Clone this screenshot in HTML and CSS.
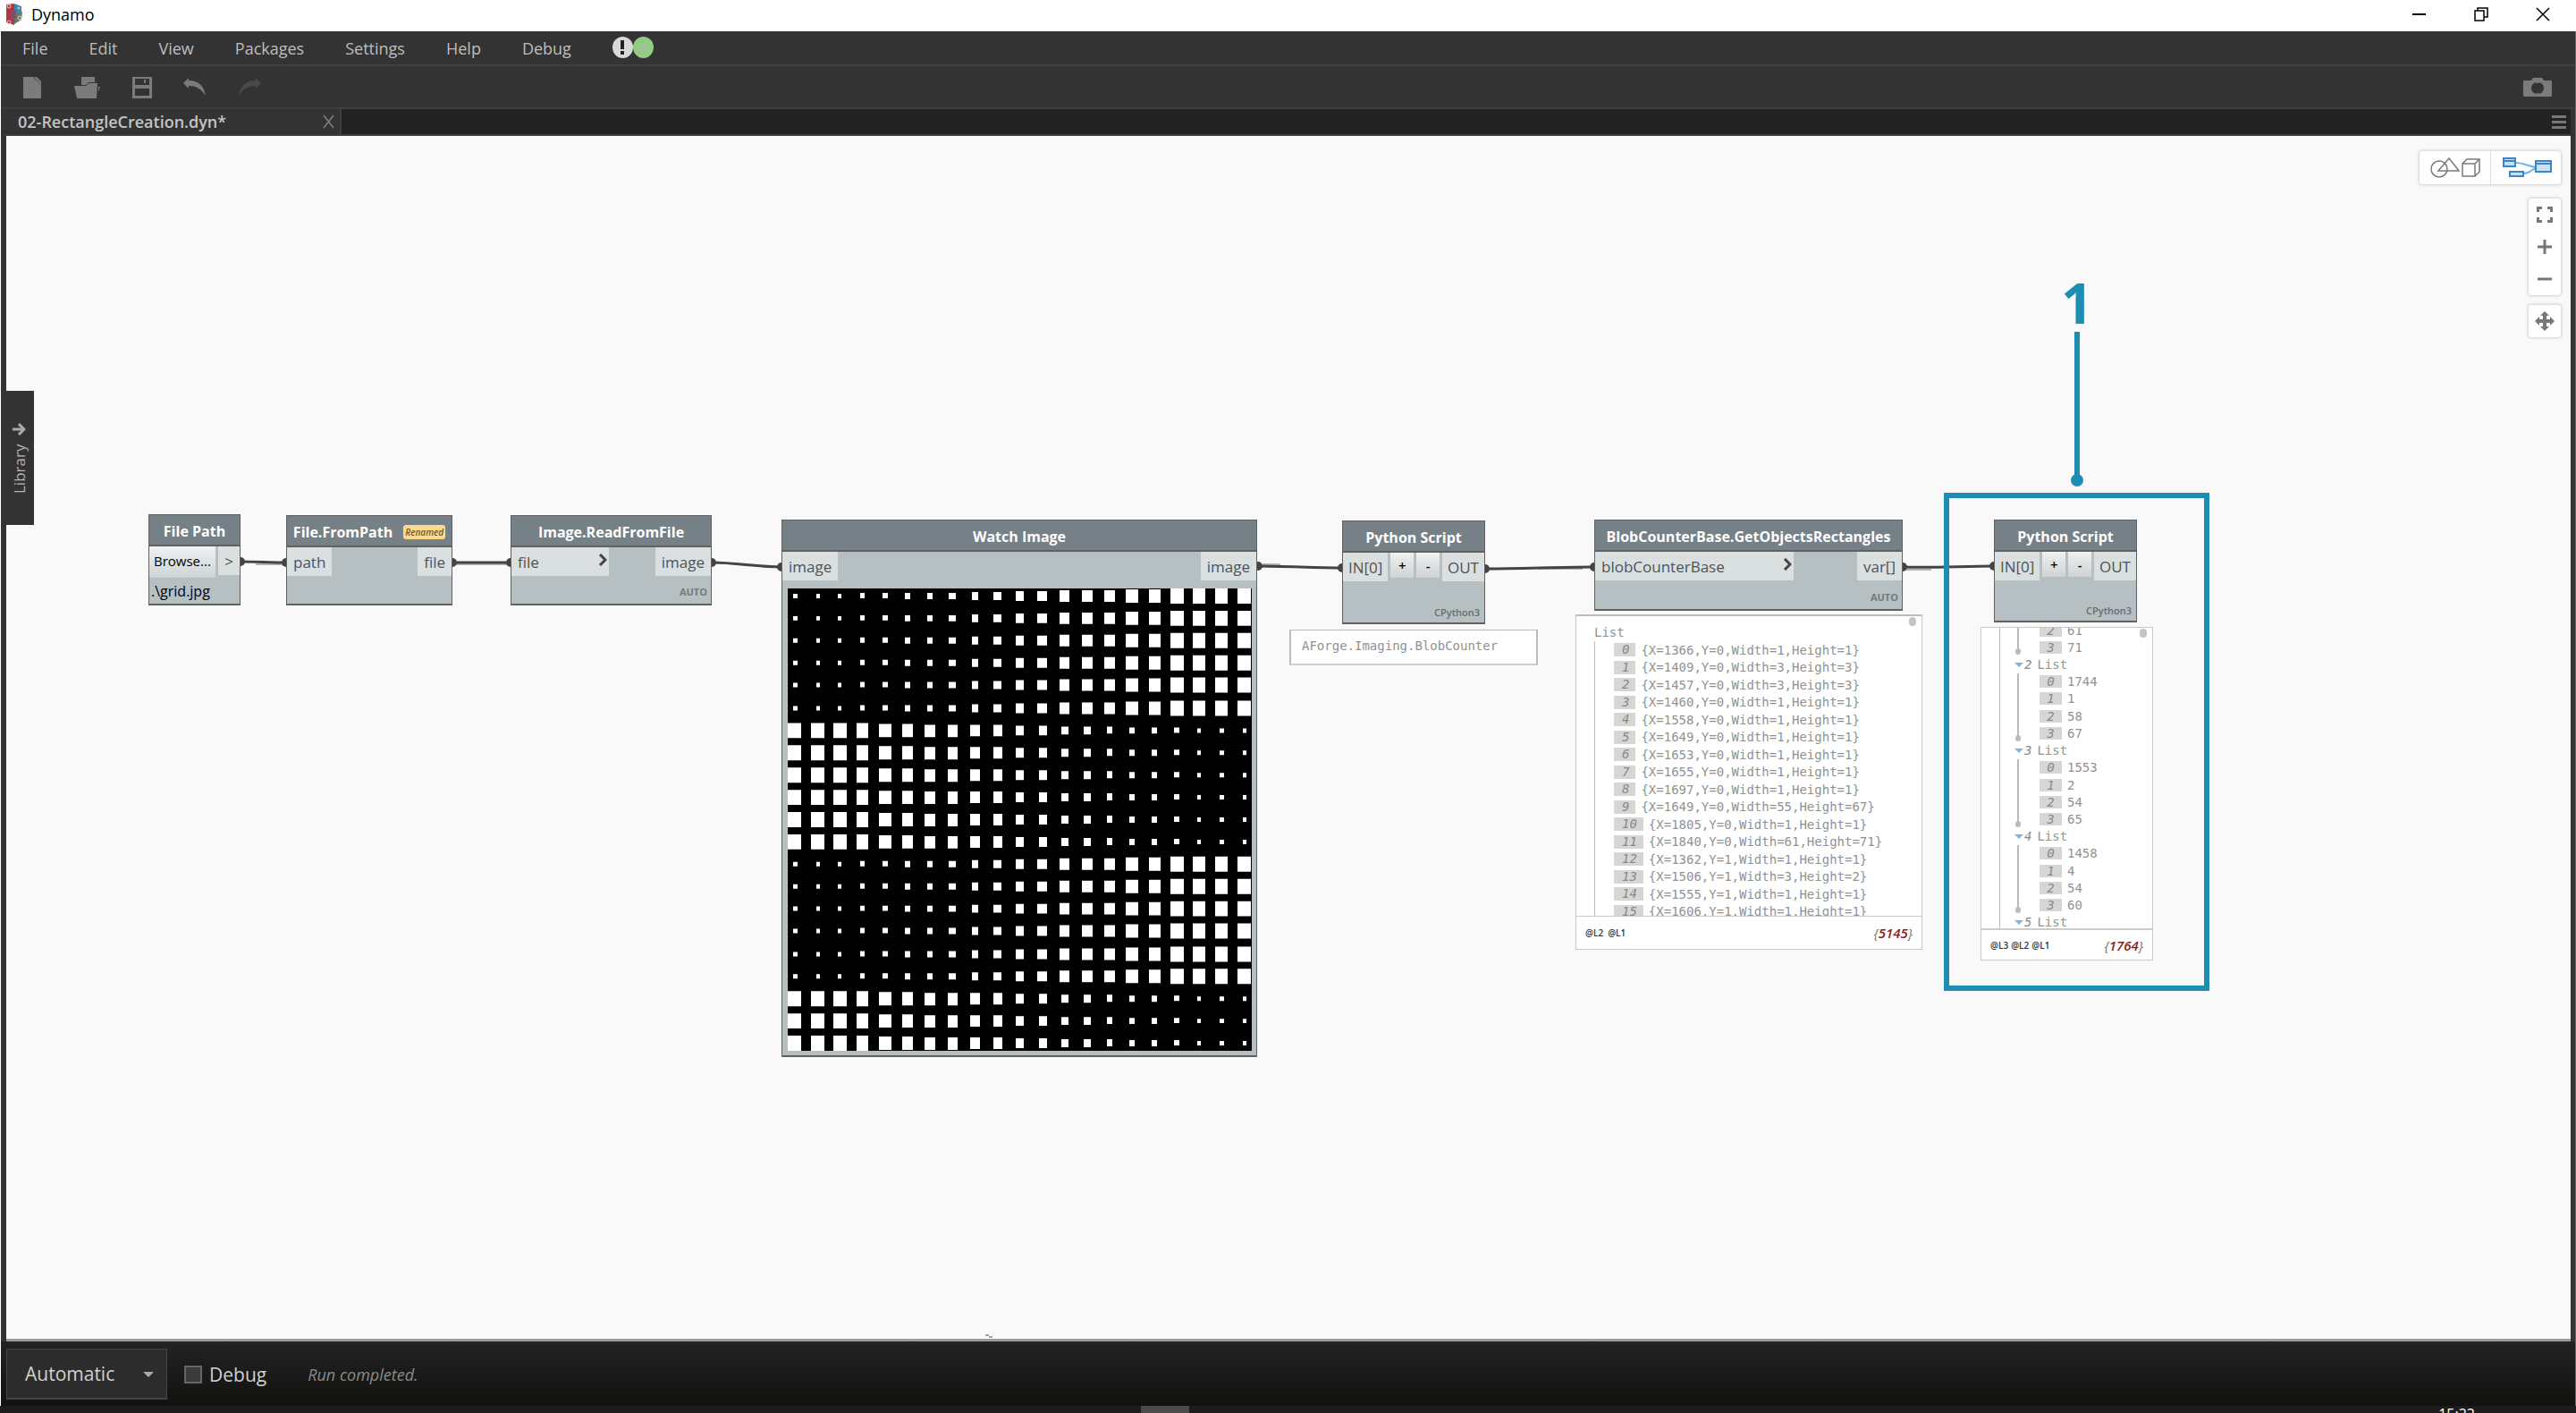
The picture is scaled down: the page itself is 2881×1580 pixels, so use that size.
FILE: index.html
```html
<!DOCTYPE html>
<html lang="en">
<head>
<meta charset="utf-8">
<title>Dynamo</title>
<link rel="stylesheet" href="styles.css">
</head>
<body>
<header class="titlebar">
  <svg class="logo" width="18" height="24" viewBox="0 0 18 24" aria-hidden="true">
    <path d="M0 1 9 0v24L0 21z" fill="#b5363f"/><path d="M9 0 17 3v7l-8 4z" fill="#3f86b4"/><path d="M9 12l9-3-1 9-8 5z" fill="#5e7d62"/><path d="M4 8l7-1v9l-6 5z" fill="#8a4a63"/>
    <g fill="none" stroke="#e9c9c6" stroke-width="1"><circle cx="3" cy="3" r="2"/><circle cx="3" cy="21" r="2"/><circle cx="15" cy="16" r="2"/><circle cx="14" cy="5" r="1"/></g>
  </svg>
  <h1 class="title">Dynamo</h1>
  <div class="window-buttons">
    <button type="button" aria-label="Minimize"><svg width="16" height="16"><path d="M0 8h15" stroke="#000" stroke-width="2"/></svg></button>
    <button type="button" aria-label="Restore"><svg width="16" height="16" fill="none" stroke="#000" stroke-width="1.5"><path d="M1 4h10v11H1zM4 4V1h11v10h-4"/></svg></button>
    <button type="button" aria-label="Close"><svg width="16" height="16"><path d="M1 1l14 14M15 1 1 15" stroke="#000" stroke-width="1.5"/></svg></button>
  </div>
</header>

<div class="shell">
  <nav class="menu">
    <button type="button">File</button><button type="button">Edit</button><button type="button">View</button><button type="button">Packages</button><button type="button">Settings</button><button type="button">Help</button><button type="button">Debug</button>
    <span class="notices"><span class="notice alert"><svg width="6" height="16" fill="#222"><path d="M1 0h4v10H1zM1 12h4v4H1z"/></svg></span><span class="notice count">4</span></span>
  </nav>

  <div class="toolbar">
    <button type="button" aria-label="New"><svg width="22" height="24" fill="#7b7b7d"><path d="M0 0h11l9 9v15H0z"/><path d="M12 0h3l5 5v4z"/></svg></button>
    <button type="button" aria-label="Open"><svg width="30" height="24" fill="#7b7b7d"><path d="M8 0h15v6h-7l-3 3H8z"/><path d="M0 10h13l3-3h10l-1 17H3z"/><path d="M27 11h2l-2 6z"/></svg></button>
    <button type="button" aria-label="Save"><svg width="22" height="24"><path fill="#7b7b7d" fill-rule="evenodd" d="M0 0h22v24H0zM3 2v7h16V2zM3 13v8h16v-8z"/><path d="M14 3v4" stroke="#7b7b7d" stroke-width="2"/></svg></button>
    <button type="button" aria-label="Undo"><svg width="26" height="24" fill="#7b7b7d"><path d="M0 7 6 1v3c10 0 17 5 19 17C20 13 14 10 6 10v3z"/></svg></button>
    <button type="button" aria-label="Redo"><svg width="26" height="24" fill="#484a4a"><path d="M26 7l-6-6v3C10 4 3 9 1 21 6 13 12 10 20 10v3z"/></svg></button>
    <button type="button" class="camera" aria-label="Export image"><svg width="32" height="24"><path fill="#7b7b7d" fill-rule="evenodd" d="M1 4h8l2-3h10l2 3h8l1 1v16l-1 1H1l-1-1V5zM16 7a5 6 0 1 0 0 11a5 6 0 1 0 0-11z"/></svg></button>
  </div>

  <div class="tabs">
    <div class="tab"><span>02-RectangleCreation.dyn*</span><button type="button" aria-label="Close tab"><svg width="16" height="16"><path d="M2 1l11 14M13 1 2 15" stroke="#767676" stroke-width="2"/></svg></button></div>
    <button type="button" class="tab-menu" aria-label="Tab list"><svg width="16" height="16" fill="#777"><path d="M0 1h16v3H0zM0 7h16v3H0zM0 13h16v3H0z"/></svg></button>
  </div>

  <main class="workspace">
    <svg class="wires" aria-hidden="true"><g transform="translate(-7 -152)">
      <g fill="none" stroke="#b4b4b4" stroke-width="2"><path d="M286 631h30M510 631h58M1412 631h20M1720 636h50M2132 637h28"/></g>
      <g fill="none" stroke="#444" stroke-width="3"><path d="M269 628C286 628 303 629 320 629M506 629H571M796 629C822 629 848 634 874 634M1406 633C1438 633 1470 635 1501 635M1661 636C1702 636 1743 634 1783 634M2128 634C2162 635 2196 633 2230 633"/></g>
      <g fill="#444"><circle cx="269" cy="628" r="5"/><circle cx="320" cy="629" r="5"/><circle cx="506" cy="629" r="5"/><circle cx="571" cy="629" r="5"/><circle cx="796" cy="629" r="5"/><circle cx="874" cy="634" r="5"/><circle cx="1407" cy="633" r="5"/><circle cx="1501" cy="635" r="5"/><circle cx="1661" cy="636" r="5"/><circle cx="1783" cy="634" r="5"/><circle cx="2128" cy="634" r="5"/><circle cx="2230" cy="633" r="5"/></g>
    </g></svg>

    <button type="button" class="library"><span>Library</span><svg width="16" height="16" fill="none" stroke="#aaa" stroke-width="3"><path d="M15 8H2M8 2 2 8l6 6"/></svg></button>

    <section class="node file-path">
      <h2>File Path</h2>
      <div class="ports"><button type="button" class="browse">Browse...</button><span class="port out">&gt;</span></div>
      <p class="path-value">.\grid.jpg</p>
    </section>

    <section class="node from-path">
      <h2><span>File.FromPath</span><small>Renamed</small></h2>
      <div class="ports"><span class="port">path</span><span class="port out">file</span></div>
    </section>

    <section class="node read-file">
      <h2>Image.ReadFromFile</h2>
      <div class="ports"><span class="port wide">file<svg class="chev" width="10" height="14"><path d="M2 1l6 6-6 6"/></svg></span><span class="port out">image</span></div>
      <footer class="lacing">AUTO</footer>
    </section>

    <section class="node watch">
      <h2>Watch Image</h2>
      <div class="ports"><span class="port">image</span><span class="port out">image</span></div>
      <svg class="grid" viewBox="0 0 519 519" preserveAspectRatio="none" role="img" aria-label="Grid of squares">
        <defs>
          <g id="up" fill="#fff"><path d="M6 6h5v5h-5zM32 6h4v5h-4zM56 6h4v5h-4zM81 5h5v6h-5zM106 5h6v6h-6zM131 5h6v7h-6zM156 5h6v7h-6zM180 5h8v7h-8zM206 4h7v9h-7zM230 4h9v9h-9zM255 3h9v11h-9zM279 3h11v11h-11zM304 2h11v13h-11zM329 2h12v13h-12zM354 2h12v13h-12zM378 1h14v15h-14zM404 1h13v15h-13zM428 0h15v17h-15zM453 0h14v17h-14zM478 0h14v17h-14zM503 0h15v17h-15z"/></g>
          <g id="down" fill="#fff"><path d="M0 0h15v17h-15zM26 0h15v17h-15zM51 0h15v17h-15zM77 0h13v17h-13zM102 1h14v15h-14zM128 1h12v15h-12zM153 2h12v14h-12zM179 2h11v14h-11zM204 2h11v13h-11zM230 2h10v13h-10zM255 3h9v11h-9zM281 3h9v11h-9zM306 4h8v9h-8zM331 4h8v9h-8zM357 4h6v8h-6zM382 5h6v7h-6zM407 5h6v7h-6zM432 5h6v6h-6zM458 6h4v5h-4zM483 6h5v5h-5zM509 6h4v5h-4z"/></g>
        </defs>
        <rect width="519" height="519" fill="#000"/>
        <use href="#up" y="0"/><use href="#up" y="25"/><use href="#up" y="50"/><use href="#up" y="75"/><use href="#up" y="100"/><use href="#up" y="126"/>
        <use href="#down" y="151"/><use href="#down" y="176"/><use href="#down" y="201"/><use href="#down" y="226"/><use href="#down" y="251"/><use href="#down" y="276"/>
        <use href="#up" y="301"/><use href="#up" y="326"/><use href="#up" y="351"/><use href="#up" y="376"/><use href="#up" y="402"/><use href="#up" y="427"/>
        <use href="#down" y="452"/><use href="#down" y="477"/><use href="#down" y="502"/>
      </svg>
    </section>

    <section class="node python python-a">
      <h2>Python Script</h2>
      <div class="ports"><span class="port">IN[0]</span><span class="steps"><button type="button">+</button><button type="button">-</button></span><span class="port out">OUT</span></div>
      <footer class="engine">CPython3</footer>
    </section>
    <div class="note">AForge.Imaging.BlobCounter</div>

    <section class="node blob">
      <h2>BlobCounterBase.GetObjectsRectangles</h2>
      <div class="ports"><span class="port wide">blobCounterBase<svg class="chev" width="10" height="14"><path d="M2 1l6 6-6 6"/></svg></span><span class="port out">var[]</span></div>
      <footer class="lacing">AUTO</footer>
    </section>
    <div class="preview preview-a">
      <div class="list">
        <p class="root">List</p>
        <ol class="rows">
          <li><i>0</i>{X=1366,Y=0,Width=1,Height=1}</li>
          <li><i>1</i>{X=1409,Y=0,Width=3,Height=3}</li>
          <li><i>2</i>{X=1457,Y=0,Width=3,Height=3}</li>
          <li><i>3</i>{X=1460,Y=0,Width=1,Height=1}</li>
          <li><i>4</i>{X=1558,Y=0,Width=1,Height=1}</li>
          <li><i>5</i>{X=1649,Y=0,Width=1,Height=1}</li>
          <li><i>6</i>{X=1653,Y=0,Width=1,Height=1}</li>
          <li><i>7</i>{X=1655,Y=0,Width=1,Height=1}</li>
          <li><i>8</i>{X=1697,Y=0,Width=1,Height=1}</li>
          <li><i>9</i>{X=1649,Y=0,Width=55,Height=67}</li>
          <li><i>10</i>{X=1805,Y=0,Width=1,Height=1}</li>
          <li><i>11</i>{X=1840,Y=0,Width=61,Height=71}</li>
          <li><i>12</i>{X=1362,Y=1,Width=1,Height=1}</li>
          <li><i>13</i>{X=1506,Y=1,Width=3,Height=2}</li>
          <li><i>14</i>{X=1555,Y=1,Width=1,Height=1}</li>
          <li><i>15</i>{X=1606,Y=1,Width=1,Height=1}</li>
        </ol>
        <span class="thumb"></span>
      </div>
      <div class="levels"><span>@L2</span><span>@L1</span><em>{<b>5145</b>}</em></div>
    </div>

    <section class="node python python-b">
      <h2>Python Script</h2>
      <div class="ports"><span class="port">IN[0]</span><span class="steps"><button type="button">+</button><button type="button">-</button></span><span class="port out">OUT</span></div>
      <footer class="engine">CPython3</footer>
    </section>
    <div class="preview preview-b">
      <div class="list">
        <div class="tree">
          <ol class="leafs tail"><li><i>2</i>61</li><li><i>3</i>71</li></ol>
          <p class="branch"><i>2</i>List</p>
          <ol class="leafs"><li><i>0</i>1744</li><li><i>1</i>1</li><li><i>2</i>58</li><li><i>3</i>67</li></ol>
          <p class="branch"><i>3</i>List</p>
          <ol class="leafs"><li><i>0</i>1553</li><li><i>1</i>2</li><li><i>2</i>54</li><li><i>3</i>65</li></ol>
          <p class="branch"><i>4</i>List</p>
          <ol class="leafs"><li><i>0</i>1458</li><li><i>1</i>4</li><li><i>2</i>54</li><li><i>3</i>60</li></ol>
          <p class="branch"><i>5</i>List</p>
        </div>
        <span class="thumb"></span>
      </div>
      <div class="levels"><span>@L3</span><span>@L2</span><span>@L1</span><em>{<b>1764</b>}</em></div>
    </div>

    <div class="highlight"></div>
    <div class="callout"><strong>1</strong><svg width="16" height="174" fill="#1f8db1"><path d="M5 0h6v164H5z"/><circle cx="8" cy="166" r="7"/></svg></div>

    <svg class="cursor" width="12" height="6" aria-hidden="true"><path d="M0 1h4v2h4v2H4V3H0z" fill="#8fa5b0"/></svg>

    <div class="view-controls">
      <div class="panel modes">
        <button type="button" aria-label="3D preview"><svg width="56" height="24" fill="none" stroke="#7a7a7a" stroke-width="1.5"><circle cx="10" cy="13" r="9"/><path d="M9 15 21 1l11 14zM36 7h14v14H36zM36 7l5-5h14v14l-5 5M50 7l5-5"/></svg></button>
        <button type="button" aria-label="Graph view"><svg width="56" height="24" fill="#c9e4f7" stroke="#3d84c8" stroke-width="2"><path d="M15 6c10 0 14 5 24 5M23 18c10 0 8-6 16-6" fill="none" stroke="#6db4e6"/><path d="M1 1h13v9H1zM1 4h13M8 16h15v5H8zM37 4h17v12H37zM37 7h17"/></svg></button>
      </div>
      <div class="panel zoom">
        <button type="button" aria-label="Fit view"><svg width="18" height="18" fill="#777"><path d="M0 0h6v3H3v3H0zM12 0h6v6h-3V3h-3zM0 12h3v3h3v3H0zM15 12h3v6h-6v-3h3z"/></svg></button>
        <button type="button" aria-label="Zoom in"><svg width="16" height="16" stroke="#777" stroke-width="3"><path d="M0 8h16M8 0v16"/></svg></button>
        <button type="button" aria-label="Zoom out"><svg width="16" height="16" stroke="#777" stroke-width="3"><path d="M0 8h16"/></svg></button>
      </div>
      <div class="panel pan">
        <button type="button" aria-label="Pan"><svg width="22" height="22" fill="#777"><path d="M11 0l5 5h-3v4h4V6l5 5-5 5v-3h-4v4h3l-5 5-5-5h3v-4H5v3l-5-5 5-5v3h4V5H6z"/></svg></button>
      </div>
    </div>
  </main>

  <footer class="runbar">
    <span class="mode"><select aria-label="Run mode"><option>Automatic</option><option>Manual</option></select></span>
    <label class="debug"><input type="checkbox">Debug</label>
    <output class="status">Run completed.</output>
  </footer>
</div>

<div class="taskbar"><span class="task"></span><time class="clock">15:22</time></div>
</body>
</html>
```
FILE: styles.css
```css
* { box-sizing: border-box; }
body { margin: 0; min-height: 100vh; display: flex; flex-direction: column; font-family: "Open Sans", sans-serif; background: #fff; overflow: hidden; }
h1, h2, p, ol { margin: 0; padding: 0; }
ol { list-style: none; }
svg { display: block; flex: none; }
button { margin: 0; padding: 0; border: 0; background: none; font: inherit; color: inherit; display: flex; align-items: center; justify-content: center; }

/* Window frame */
.titlebar { height: 35px; padding: 0 29px 3px 7px; display: flex; align-items: center; gap: 10px; }
.title { font-size: 18px; font-weight: 400; color: #000; }
.window-buttons { margin-left: auto; display: flex; gap: 53px; }
.shell { flex: 1; display: flex; flex-direction: column; margin-left: 1px; border-right: 1px solid #666; background: #333; }
.menu { height: 39px; padding: 0 24px; display: flex; align-items: center; gap: 46px; border-bottom: 2px solid #404040; font-size: 18px; color: #bdbdbd; }
.notices { display: flex; margin-top: -2px; }
.notice { width: 23px; height: 24px; border-radius: 50%; display: grid; place-items: center; font-size: 14px; }
.alert { background: #d9d9d9; }
.count { background: #92cb81; color: #b3b9ae; }
.toolbar { height: 48px; padding: 2px 26px 0 25px; display: flex; align-items: center; gap: 35px; border-bottom: 2px solid #3e3e3e; }
.camera { margin-left: auto; }
.tabs { height: 30px; margin: 0 5px 0 4px; padding-right: 5px; display: flex; justify-content: space-between; background: #222; border-bottom: 2px solid #3e3e3e; }
.tab { width: 377px; padding: 0 4px 0 15px; display: flex; align-items: center; justify-content: space-between; background: #333; border-right: 2px solid #3e3e3e; font-size: 18px; font-weight: 600; color: #c4c4c4; }

/* Workspace */
.workspace { position: relative; flex: 1; margin: 0 5px 0 6px; background: #f9f9f9; border-bottom: 3px solid #9b9b9b; }
.wires { position: absolute; inset: 0; width: 100%; height: 100%; }
.library { position: absolute; left: 0; top: 285px; width: 31px; height: 150px; padding-left: 3px; background: #333; color: #b4b4b4; writing-mode: vertical-rl; transform: rotate(180deg); font-size: 17px; gap: 8px; }

.node { position: absolute; display: flex; flex-direction: column; background: #b6bfc2; border: 1px solid #62615f; border-bottom-width: 2px; color: #4f5355; }
.node h2 { height: 35px; flex: none; padding-top: 2px; display: flex; align-items: center; justify-content: center; gap: 12px; background: #768187; border-bottom: 2px solid #62615f; color: #fff; font-size: 16px; font-weight: 700; white-space: nowrap; }
.node small { padding: 0 2px; height: 16px; line-height: 16px; border-radius: 3px; background: #fed98d; color: #6a5a35; font-size: 10px; font-style: italic; font-weight: 600; }
.ports { display: flex; justify-content: space-between; align-items: flex-start; font-size: 17px; }
.port { height: 32px; padding: 0 7px; display: flex; align-items: center; justify-content: space-between; background: #dadfe0; }
.port.wide { padding-right: 2px; }
.chev { fill: none; stroke: #444; stroke-width: 3; margin-bottom: 4px; }
.lacing, .engine { margin-top: auto; padding: 0 4px 6px; text-align: right; font-size: 11px; line-height: 15px; font-weight: 700; color: #717b80; }
.engine { padding: 0 5px 4px; font-weight: 600; color: #666c6f; }
.browse { height: 35px; padding: 0 5px 3px; background: linear-gradient(#eff1f2, #ced3d4); color: #000; font-size: 15px; }
.path-value { padding: 4px 2px; font-size: 16px; line-height: 22px; color: #000; }
.steps { display: flex; gap: 3px; }
.steps button { width: 26px; height: 28px; background: linear-gradient(#eff1f2, #ced3d4); color: #000; font-size: 15px; font-weight: 600; }

.file-path { left: 159px; top: 423px; width: 103px; height: 102px; }
.from-path { left: 313px; top: 424px; width: 186px; height: 101px; }
.read-file { left: 564px; top: 424px; width: 225px; height: 101px; }
.read-file .wide { width: 109px; }
.watch { left: 867px; top: 429px; width: 532px; height: 601px; }
.watch .ports { margin-bottom: 9px; }
.grid { width: 519px; margin: 0 auto 5px 6px; flex: 1; min-height: 0; }
.python { width: 160px; }
.python .port { padding: 0 6px; }
.python-a { left: 1494px; top: 430px; height: 116px; }
.blob { left: 1776px; top: 429px; width: 345px; height: 102px; }
.blob .wide { width: 222px; }
.python-b { left: 2223px; top: 429px; height: 115px; }

/* Output previews */
.note, .preview { position: absolute; background: #fff; font-family: "DejaVu Sans Mono", monospace; font-size: 14px; color: #929292; }
.note { left: 1435px; top: 552px; width: 278px; height: 40px; padding: 0 12px; line-height: 34px; border: 2px solid #bcbcbc; border-top-width: 1px; border-bottom-color: #d0d0d0; }
.preview { display: flex; flex-direction: column; border: 1px solid #c8c8c8; }
.list { position: relative; flex: 1; min-height: 0; overflow: hidden; }
.thumb { position: absolute; right: 6px; top: 1px; width: 8px; height: 10px; border-radius: 4px; background: #c4c4c4; }
.preview i { color: #888; }
.rows i, .leafs i { background: #d6d6d5; }
.preview-a { left: 1755px; top: 535px; width: 388px; height: 375px; border-top: 2px solid #bcbcbc; }
.preview-a .list { padding: 8px 20px 0; }
.root { line-height: 20px; }
.rows { height: 312px; padding-left: 21px; display: flex; flex-direction: column; border-left: 1px solid #bbb; white-space: pre; }
.rows li { flex: 1; display: flex; align-items: center; gap: 6px; }
.rows i { padding: 0 7px 0 9px; height: 15px; line-height: 15px; }
.levels { height: 37px; flex: none; padding: 0 10px; display: flex; align-items: center; gap: 5px; border-top: 1px solid #ccc; color: #333; font-family: "Open Sans", sans-serif; font-size: 10px; font-weight: 600; }
.levels em { margin-left: auto; font-size: 15px; font-weight: 400; color: #777; }
.levels b { font-weight: 600; color: #8b1a1a; }
.preview-b { left: 2208px; top: 549px; width: 193px; height: 373px; }
.preview-b .levels { height: 35px; gap: 3px; border-top-width: 2px; }
.tree { height: 346px; margin: -7px 0 0 20px; padding-left: 18px; display: flex; flex-direction: column; border-left: 1px solid #bbb; }
.leafs { position: relative; flex: 4; min-height: 0; display: flex; flex-direction: column; padding-left: 26px; }
.leafs.tail { flex: 2; }
.leafs::before { content: ""; position: absolute; left: 1px; top: 0; bottom: 3px; width: 2px; background: #bbb; }
.leafs::after { content: ""; position: absolute; left: -1px; bottom: 1px; width: 6px; height: 7px; border-radius: 50%; background: #bbb; }
.leafs li { flex: 1; min-height: 0; display: flex; align-items: center; gap: 6px; }
.leafs i { width: 25px; height: 14px; line-height: 14px; text-align: center; }
.branch { flex: 1; min-height: 0; display: flex; align-items: center; gap: 6px; margin-left: -2px; }
.branch i { display: flex; align-items: center; gap: 1px; }
.branch i::before { content: ""; border: 5px solid transparent; border-top-color: #85b5de; border-bottom: 0; }

/* Annotation */
.highlight { position: absolute; left: 2167px; top: 399px; width: 297px; height: 557px; border: 6px solid #1f8db1; }
.callout { position: absolute; left: 2298px; top: 154px; width: 36px; display: flex; flex-direction: column; align-items: center; color: #1f8db1; font-size: 62px; line-height: 65px; }
.cursor { position: absolute; left: 1095px; bottom: 0; }

/* View controls */
.view-controls { position: absolute; right: 11px; top: 17px; display: flex; flex-direction: column; align-items: flex-end; }
.panel { display: flex; background: #fff; border-radius: 3px; box-shadow: 0 0 3px 1px #d0d0d0; }
.modes button { width: 79px; height: 37px; }
.modes button + button { padding-left: 4px; border-left: 1px solid #ddd; }
.zoom { flex-direction: column; width: 36px; height: 108px; margin: 16px 0 11px; }
.zoom button, .pan button { width: 36px; height: 36px; }

/* Run bar */
.runbar { height: 72px; padding: 8px 6px 7px; display: flex; align-items: center; background: linear-gradient(#222323, #11110f); color: #d0d0d0; font-size: 22px; }
.mode { position: relative; display: block; width: 180px; height: 57px; }
.mode::after { content: ""; position: absolute; right: 15px; top: 26px; border: 6px solid transparent; border-top-color: #aaa; border-bottom: 0; }
.mode select { width: 100%; height: 100%; padding: 0 20px; appearance: none; background: #2c2c2c; border: 1px solid #454545; border-bottom-width: 2px; border-radius: 0; color: inherit; font: inherit; font-size: 21px; }
.debug { display: flex; align-items: center; gap: 8px; margin-left: 19px; font-size: 21px; }
.debug input { appearance: none; width: 20px; height: 20px; margin: 0; background: #3a3a3a; border: 2px solid #666; }
.status { margin-left: 46px; font-size: 18px; font-style: italic; color: #8a8a8a; }
.taskbar { height: 8px; padding: 0 113px 0 1276px; display: flex; justify-content: space-between; overflow: hidden; background: #1e1d1e; }
.task { width: 54px; background: #4b4b4b; }
.clock { color: #fff; font-size: 16px; line-height: 18px; }
```
